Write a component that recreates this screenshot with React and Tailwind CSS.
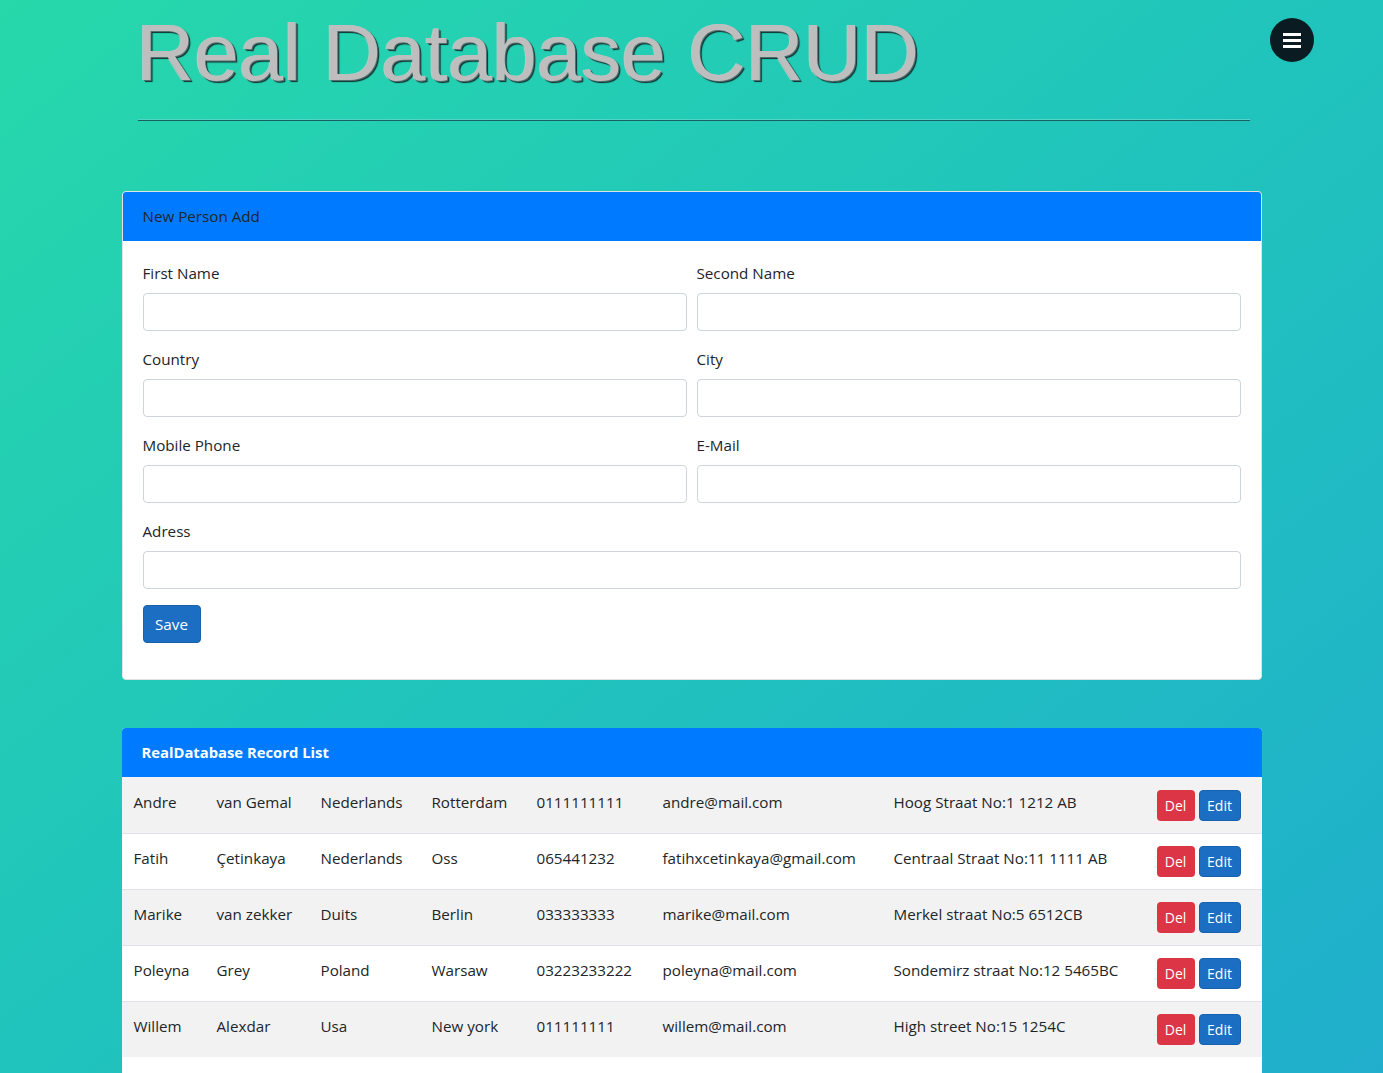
import React from 'react';

const people = [
  ['Andre', 'van Gemal', 'Nederlands', 'Rotterdam', '0111111111', 'andre@mail.com', 'Hoog Straat No:1 1212 AB'],
  ['Fatih', 'Çetinkaya', 'Nederlands', 'Oss', '065441232', 'fatihxcetinkaya@gmail.com', 'Centraal Straat No:11 1111 AB'],
  ['Marike', 'van zekker', 'Duits', 'Berlin', '033333333', 'marike@mail.com', 'Merkel straat No:5 6512CB'],
  ['Poleyna', 'Grey', 'Poland', 'Warsaw', '03223233222', 'poleyna@mail.com', 'Sondemirz straat No:12 5465BC'],
  ['Willem', 'Alexdar', 'Usa', 'New york', '011111111', 'willem@mail.com', 'High street No:15 1254C'],
];

const Field = ({ label, className = '' }) => (
  <div className={`flex flex-col ${className}`}>
    <label className="h-[24px] mb-2 leading-6">{label}</label>
    <input className="h-[38px] w-full rounded border border-[#ced4da] bg-white" />
  </div>
);

const Row = ({ person, striped, first }) => {
  const border = first ? 'border-t border-[#f2f2f2]' : 'border-t border-[#dee2e6]';
  return (
    <tr className={`h-[56px] ${striped ? 'bg-[#f2f2f2]' : 'bg-white'}`}>
      {person.map((cell) => (
        <td key={cell} className={`px-3 pt-3 pb-[19px] align-top leading-6 whitespace-nowrap ${border}`}>{cell}</td>
      ))}
      <td className={`pl-3 align-top pt-3 whitespace-nowrap ${border}`}>
        <div className="flex gap-1">
          <button className="h-[31px] w-[38px] rounded bg-[#dc3545] text-white text-[14px]">Del</button>
          <button className="h-[31px] w-[42px] rounded bg-[#1b6ec2] border border-[#1861ac] text-white text-[14px]">Edit</button>
        </div>
      </td>
    </tr>
  );
};

export default function App() {
  return (
    <div className="relative h-screen overflow-hidden bg-linear-to-br from-[#27d8aa] to-[#20aecc] font-['Open_Sans',sans-serif] text-[15.2px] text-[#212529]">
      <button className="absolute left-[1270px] top-[18px] w-11 h-11 rounded-full bg-[#0a1c22] flex flex-col items-center justify-center gap-[3px]">
        <span className="block w-[18px] h-[3px] bg-white" />
        <span className="block w-[18px] h-[3px] bg-white" />
        <span className="block w-[18px] h-[3px] bg-white" />
      </button>

      <div className="mx-auto w-[1140px]">
        <div className="px-4">
          <h1 className="h-[120px] -ml-px pt-[7px] font-['Liberation_Sans',sans-serif] text-[80px] leading-[92px] text-[#bebebe] [text-shadow:1px_1px_0_#4f6f6c,2px_2px_1px_#0f2f30,-1px_0_0_#a9cfc6] whitespace-nowrap">Real Database CRUD</h1>
          <hr className="w-[1112px] border-t border-[#1a5f62] shadow-[0_-1px_0_#52d4c6]" />
        </div>

        <section className="mt-[70px] h-[489px] rounded border border-[#dfe3e6] bg-white overflow-hidden">
          <div className="h-[49px] bg-[#007bff] px-5 flex items-center">New Person Add</div>
          <div className="px-5 pt-5">
            <div className="grid grid-cols-2 gap-x-[10px] gap-y-[16px]">
              <Field label="First Name" />
              <Field label="Second Name" />
              <Field label="Country" />
              <Field label="City" />
              <Field label="Mobile Phone" />
              <Field label="E-Mail" />
              <Field label="Adress" className="col-span-2" />
            </div>
            <button className="mt-4 h-[38px] w-[58px] rounded bg-[#1b6ec2] border border-[#1861ac] text-white">Save</button>
          </div>
        </section>

        <section className="mt-[48px] rounded-t bg-white h-[400px]">
          <div className="h-[49px] rounded-t bg-[#007bff] px-5 flex items-center text-white font-bold text-[14.8px]">RealDatabase Record List</div>
          <table className="w-full border-separate border-spacing-0 table-fixed">
            <colgroup>
              <col className="w-[83px]" />
              <col className="w-[104px]" />
              <col className="w-[111px]" />
              <col className="w-[105px]" />
              <col className="w-[126px]" />
              <col className="w-[231px]" />
              <col className="w-[263px]" />
              <col />
            </colgroup>
            <tbody>
              {people.map((person, i) => (
                <Row key={person[0]} person={person} striped={i % 2 === 0} first={i === 0} />
              ))}
            </tbody>
          </table>
        </section>
      </div>
    </div>
  );
}
